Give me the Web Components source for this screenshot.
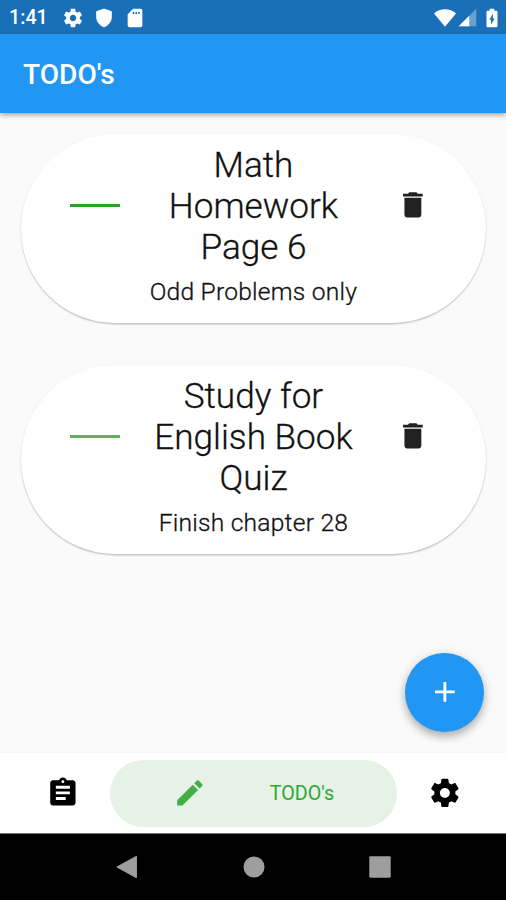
<!DOCTYPE html>
<html lang="en"><head><meta charset="utf-8"><title>TODO's</title>
<style>html,body{margin:0;height:100%;overflow:hidden}body{font-family:Roboto,"Noto Sans",sans-serif}</style></head>
<body><todo-app></todo-app>
<script>
const ICONS={
gear:'<path fill-rule="evenodd" d="M19.43 12.98c.04-.32.07-.64.07-.98s-.03-.66-.07-.98l2.11-1.65c.19-.15.24-.42.12-.64l-2-3.46c-.12-.22-.39-.3-.61-.22l-2.49 1c-.52-.4-1.08-.73-1.69-.98l-.38-2.65C14.46 2.18 14.25 2 14 2h-4c-.25 0-.46.18-.49.42l-.38 2.65c-.61.25-1.17.59-1.69.98l-2.49-1c-.23-.09-.49 0-.61.22l-2 3.46c-.13.22-.07.49.12.64l2.11 1.65c-.04.32-.07.65-.07.98s.03.66.07.98l-2.11 1.65c-.19.15-.24.42-.12.64l2 3.46c.12.22.39.3.61.22l2.49-1c.52.4 1.08.73 1.69.98l.38 2.65c.03.24.24.42.49.42h4c.25 0 .46-.18.49-.42l.38-2.65c.61-.25 1.17-.59 1.69-.98l2.49 1c.23.09.49 0 .61-.22l2-3.46c.12-.22.07-.49-.12-.64l-2.11-1.65zM12 15.5c-1.93 0-3.5-1.57-3.5-3.5s1.57-3.5 3.5-3.5 3.5 1.57 3.5 3.5-1.57 3.5-3.5 3.5z"/>',
shield:'<path d="M12 2.200L4 5v5.800c0 5 3.200 9 8 11 4.800-2 8-6 8-11V5z" stroke="currentColor" stroke-linejoin="round"/>',
sd:'<path fill-rule="evenodd" d="M18 2h-8L4 8v12c0 1.100.9 2 2 2h12c1.100 0 2-.9 2-2V4c0-1.100-.9-2-2-2zM9.500 5.500h1.700v2.200H9.500zm3 0h1.700v2.200h-1.700zm3 0h1.700v2.200h-1.700z"/>',
wifi:'<path d="M12 21.500L24 7C20.500 4 16.500 2.500 12 2.500S3.500 4 0 7z"/>',
signal:'<path opacity=".35" d="M2 22h20V2z"/><path d="M2 22h12V10z"/>',
battery:'<path fill-rule="evenodd" d="M16.700 4H14.500V2h-5v2H7.300C6.600 4 6 4.600 6 5.300v15.300c0 .8.6 1.400 1.300 1.400h9.300c.8 0 1.400-.6 1.400-1.300V5.300c0-.7-.6-1.300-1.300-1.300zM11 19V14H9.200L13 7v5.500h1.900z"/>',
trash:'<path d="M6 19c0 1.100.9 2 2 2h8c1.100 0 2-.9 2-2V7H6zM19 4h-3.500l-1-1h-5l-1 1H5v2h14z"/>',
plus:'<path d="M19 13h-6v6h-2v-6H5v-2h6V5h2v6h6z"/>',
clip:'<path fill-rule="evenodd" d="M19 3h-4.180C14.400 1.840 13.300 1 12 1s-2.400.84-2.820 2H5c-1.100 0-2 .9-2 2v14c0 1.100.9 2 2 2h14c1.100 0 2-.9 2-2V5c0-1.100-.9-2-2-2zm-7 0c.55 0 1 .45 1 1s-.45 1-1 1-1-.45-1-1 .45-1 1-1zm2 14H7v-2h7zm3-4H7v-2h10zm0-4H7V7h10z"/>',
pencil:'<path d="M3 17.250V21h3.750L17.810 9.940l-3.750-3.750zM20.710 7.040c.39-.39.39-1.020 0-1.410l-2.340-2.340c-.39-.39-1.020-.39-1.410 0l-1.830 1.830 3.750 3.750z"/>',
back:'<path d="M20 3v18L3.500 12z" stroke="currentColor" stroke-linejoin="round"/>',
home:'<circle cx="12" cy="12" r="9"/>',
recent:'<rect x="2.800" y="2.800" width="18.400" height="18.400" rx="1.200"/>'};
function define(name,html){customElements.define(name,class extends HTMLElement{constructor(){super();this.attachShadow({mode:'open'}).innerHTML=html}})}
customElements.define('md-icon',class extends HTMLElement{constructor(){super();this.attachShadow({mode:'open'})}
connectedCallback(){this.shadowRoot.innerHTML='<style>:host{display:block;flex:none;width:var(--size,33.750px);height:var(--size,33.750px)}svg{display:block;width:100%;height:100%;fill:currentColor;overflow:visible}</style><svg viewBox="0 0 24 24">'+ICONS[this.getAttribute('name')]+'</svg>'}});
define('status-bar',`<style>:host{display:flex;align-items:center;height:34px;box-sizing:border-box;padding:1px 3px 0 9px;background:#1a70b8;color:#fff;--size:22px}
span{font-size:19.700px;font-weight:500;line-height:34px;width:53px;padding-top:1px}.r{margin-left:auto;display:flex}.l{display:flex;gap:9px}</style>
<span>1:41</span><div class="l"><md-icon name="gear"></md-icon><md-icon name="shield"></md-icon><md-icon name="sd"></md-icon></div>
<div class="r"><md-icon name="wifi"></md-icon><md-icon name="signal" style="--size:21px;margin-left:1px"></md-icon><md-icon name="battery" style="margin-left:3px"></md-icon></div>`);
define('app-bar',`<style>:host{display:flex;align-items:center;height:79px;box-sizing:border-box;padding:2px 23px 0;background:#2196f3;color:#fff;font-size:28.100px;font-weight:500;box-shadow:0 2px 5px rgba(0,0,0,.36);position:relative}</style><slot></slot>`);
define('todo-card',`<style>:host{display:grid;grid-template-columns:50px 232px 34px;justify-content:space-between;align-items:start;height:189px;box-sizing:border-box;padding:10px 56.500px 0 49px;border-radius:94px;background:#fff;color:#111;box-shadow:0 1.400px 1.500px rgba(0,0,0,.22),0 0 1px rgba(0,0,0,.06)}
i{display:block;height:3px;margin-top:60px;background:var(--line,#27a52a)}.t{text-align:center;font-size:35.150px;line-height:41px;font-weight:300;-webkit-text-stroke:.3px #111;margin:1px 0 0 -4.300px;width:232px}
.s{font-size:24.600px;line-height:29px;margin-top:9px;letter-spacing:.23px}md-icon{margin-top:44px;color:#212121}</style>
<i></i><div class="t"><slot name="title"></slot><div class="s"><slot></slot></div></div><md-icon name="trash"></md-icon>`);
define('add-button',`<style>:host{position:absolute;right:22px;bottom:21.300px;width:78.750px;height:78.750px;border-radius:50%;background:#2196f3;color:#fff;display:flex;align-items:center;justify-content:center;box-shadow:0 5px 8px rgba(0,0,0,.25),0 1px 12px rgba(0,0,0,.1)}</style><md-icon name="plus"></md-icon>`);
define('tab-bar',`<style>:host{display:flex;align-items:center;justify-content:space-between;height:80px;box-sizing:border-box;padding:0 44.500px 0 45.500px;background:#fff;box-shadow:0 0 2px rgba(0,0,0,.05);position:relative}
.p{width:287px;height:67px;box-sizing:border-box;border-radius:34px;background:#e5f2e5;color:#2ea836;display:flex;align-items:center;padding-left:63px;margin:0 13.500px;gap:63px;font-size:19.700px}md-icon[name=pencil]{color:#43ae48}</style>
<md-icon name="clip"></md-icon><div class="p"><md-icon name="pencil"></md-icon><span style="padding-top:1px">TODO's</span></div><md-icon name="gear"></md-icon>`);
define('system-nav',`<style>:host{display:flex;justify-content:center;align-items:center;gap:98.500px;height:67px;box-sizing:border-box;background:#000;border-top:1px solid #777;color:#9e9e9e;--size:28px;padding-left:1px}</style>
<md-icon name="back"></md-icon><md-icon name="home"></md-icon><md-icon name="recent"></md-icon>`);
define('todo-app',`<style>:host{display:flex;flex-direction:column;width:506px;height:900px;background:#fafafa}main{flex:1;position:relative;display:flex;flex-direction:column;gap:42px;padding:21px 20px 0 21px}app-bar{z-index:1}</style>
<status-bar></status-bar><app-bar>TODO's</app-bar><main>
<todo-card><span slot="title">Math<br>Homework<br>Page 6</span>Odd Problems only</todo-card>
<todo-card style="--line:#5bb35f"><span slot="title">Study for<br>English Book<br>Quiz</span>Finish chapter 28</todo-card><add-button></add-button></main>
<tab-bar></tab-bar><system-nav></system-nav>`);
</script></body></html>
